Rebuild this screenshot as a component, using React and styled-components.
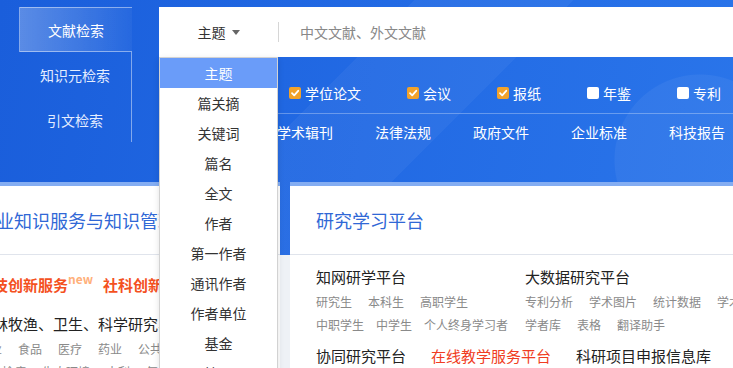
import React from "react";
import styled, { createGlobalStyle, css } from "styled-components";

const GlobalStyle = createGlobalStyle`
  html, body {
    margin: 0;
    padding: 0;
    overflow: hidden;
    background: #eef1f6;
  }
  body {
    font-family: "Noto Sans CJK SC", "Noto Sans", sans-serif;
  }
`;

const Page = styled.div`
  width: 733px;
  height: 368px;
  overflow: hidden;
  background: #eef1f6;
`;

const Hero = styled.div`
  height: 255px;
  padding-top: 7px;
  box-sizing: border-box;
  display: flex;
  background:
    radial-gradient(circle at 700px 160px, rgba(255, 255, 255, 0.05) 0 85px, transparent 86px),
    linear-gradient(135deg, transparent 0 42%, rgba(255, 255, 255, 0.045) 42% 58%, transparent 58%),
    linear-gradient(100deg, #1a5edb 0%, #226ae4 50%, #2a75ea 100%);
`;

const Tabs = styled.div`
  flex: none;
  width: 113px;
  margin-left: 19px;
  display: flex;
  flex-direction: column;
`;

const Tab = styled.div`
  height: 45px;
  box-sizing: border-box;
  display: flex;
  align-items: center;
  justify-content: center;
  font-size: 14px;
  color: #e4edff;
  ${({ $active }) =>
    $active
      ? css`
          color: #fff;
          border: 1px solid rgba(255, 255, 255, 0.45);
          border-right: none;
          background: linear-gradient(90deg, rgba(255, 255, 255, 0.28), rgba(255, 255, 255, 0.04));
        `
      : css`
          border-right: 1px solid rgba(255, 255, 255, 0.45);
        `}
`;

const SearchArea = styled.div`
  flex: none;
  width: 640px;
  margin-left: 27px;
`;

const SearchBar = styled.div`
  position: relative;
  height: 50px;
  background: #fff;
  display: flex;
  align-items: center;
`;

const Select = styled.div`
  flex: none;
  width: 119px;
  display: flex;
  align-items: center;
  justify-content: center;
  gap: 6px;
  font-size: 14px;
  color: #333;
  line-height: 20px;
`;

const Caret = styled.span`
  width: 0;
  height: 0;
  border-left: 4px solid transparent;
  border-right: 4px solid transparent;
  border-top: 5px solid #666;
`;

const Divider = styled.span`
  flex: none;
  width: 1px;
  height: 20px;
  background: #d6d6d6;
`;

const Placeholder = styled.span`
  padding-left: 21px;
  font-size: 14px;
  color: #888;
  line-height: 20px;
`;

const Dropdown = styled.ul`
  position: absolute;
  top: 50px;
  left: 0;
  z-index: 10;
  width: 119px;
  box-sizing: border-box;
  margin: 0;
  padding: 0;
  list-style: none;
  background: #fff;
  border: 1px solid #d2d2d2;
  box-shadow: 0 2px 6px rgba(0, 0, 0, 0.12);
`;

const Option = styled.li`
  height: 30px;
  line-height: 30px;
  text-align: center;
  font-size: 14px;
  color: #333;
  ${({ $active }) =>
    $active &&
    css`
      background: #6a9cf9;
      color: #fff;
    `}
`;

const CheckRow = styled.div`
  display: flex;
  gap: 46px;
  padding: 28px 0 12px 12px;
  border-bottom: 1px solid rgba(255, 255, 255, 0.3);
  white-space: nowrap;
`;

const CheckItem = styled.label`
  display: flex;
  align-items: center;
  gap: 4px;
  font-size: 14px;
  line-height: 16px;
  color: #fff;
`;

const Box = styled.span`
  width: 12px;
  height: 12px;
  border-radius: 2px;
  display: flex;
  background: ${({ $checked }) => ($checked ? "#f2a22a" : "#fff")};
`;

const CatRow = styled.div`
  height: 36px;
  display: flex;
  align-items: center;
  gap: 42px;
  padding-left: 48px;
  font-size: 14px;
  line-height: 16px;
  color: #fff;
  white-space: nowrap;
`;

const Panels = styled.div`
  display: flex;
  gap: 10px;
  margin-top: -73px;
  margin-left: -48px;
`;

const Panel = styled.div`
  flex: none;
  width: ${({ $width }) => $width}px;
  height: 200px;
  background: #fff;
  border-top: 4px solid #84adf2;
`;

const PanelHead = styled.div`
  height: 69px;
  box-sizing: border-box;
  display: flex;
  align-items: center;
  padding-left: 26px;
  border-bottom: 1px solid #e0e4ec;
  font-size: 18px;
  color: #3068d6;
  white-space: nowrap;
  overflow: hidden;
`;

const PanelBody = styled.div`
  padding: ${({ $top }) => $top}px 0 0 26px;
  white-space: nowrap;
`;

const HotRow = styled.div`
  font-size: 15px;
  line-height: 20px;
  font-weight: bold;
  color: #f4511e;
`;

const NewMark = styled.sup`
  font-size: 12px;
  line-height: 12px;
  color: #ffb07a;
  margin-right: 10px;
  vertical-align: 7px;
`;

const TextRow = styled.div`
  margin-top: ${({ $mt }) => $mt || 0}px;
  font-size: 15px;
  line-height: 20px;
  color: #222;
`;

const Tags = styled.div`
  display: flex;
  gap: ${({ $gap }) => $gap || 16}px;
  margin-top: ${({ $mt }) => $mt || 0}px;
  font-size: 12px;
  line-height: 18px;
  color: #8a8a8a;
`;

const Columns = styled.div`
  display: grid;
  grid-template-columns: 209px 209px;
`;

const PlatformRow = styled.div`
  display: flex;
  gap: 25px;
  margin-top: 12px;
  font-size: 15px;
  line-height: 20px;
  color: #222;
`;

const Platform = styled.span`
  color: ${({ $hot }) => ($hot ? "#f03c22" : "#222")};
`;

const checks = [
  ["学术期刊", true],
  ["学位论文", true],
  ["会议", true],
  ["报纸", true],
  ["年鉴", false],
  ["专利", false],
];

const cats = ["图书", "学术辑刊", "法律法规", "政府文件", "企业标准", "科技报告"];

const fields = [
  "主题", "篇关摘", "关键词", "篇名", "全文", "作者", "第一作者",
  "通讯作者", "作者单位", "基金", "摘要", "小标题",
];

function Checkbox({ checked }) {
  return (
    <Box $checked={checked}>
      {checked && (
        <svg width="12" height="12" viewBox="0 0 12 12">
          <path d="M3 6.2 L5.2 8.4 L9.2 3.8" fill="none" stroke="#fff" strokeWidth="1.8" strokeLinecap="round" strokeLinejoin="round" />
        </svg>
      )}
    </Box>
  );
}

export default function App() {
  return (
    <Page>
      <GlobalStyle />
      <Hero>
        <Tabs>
          <Tab $active>文献检索</Tab>
          <Tab>知识元检索</Tab>
          <Tab>引文检索</Tab>
        </Tabs>
        <SearchArea>
          <SearchBar>
            <Select>
              主题 <Caret />
            </Select>
            <Divider />
            <Placeholder>中文文献、外文文献</Placeholder>
            <Dropdown>
              {fields.map((f, i) => (
                <Option key={f} $active={i === 0}>{f}</Option>
              ))}
            </Dropdown>
          </SearchBar>
          <CheckRow>
            {checks.map(([label, on]) => (
              <CheckItem key={label}>
                <Checkbox checked={on} />
                {label}
              </CheckItem>
            ))}
          </CheckRow>
          <CatRow>
            {cats.map((c) => (
              <span key={c}>{c}</span>
            ))}
          </CatRow>
        </SearchArea>
      </Hero>

      <Panels>
        <Panel $width={328}>
          <PanelHead>行业知识服务与知识管理平台</PanelHead>
          <PanelBody $top={18}>
            <HotRow>
              科技创新服务<NewMark>new</NewMark>社科创新服务
            </HotRow>
            <TextRow $mt={19}>农林牧渔、卫生、科学研究、教育</TextRow>
            <Tags $mt={6}>
              <span>农业</span><span>食品</span><span>医疗</span><span>药业</span><span>公共卫生</span>
            </Tags>
            <Tags $mt={5}>
              <span>检验检疫</span><span>生态环境</span><span>水利</span><span>气象</span>
            </Tags>
          </PanelBody>
        </Panel>

        <Panel $width={480}>
          <PanelHead>研究学习平台</PanelHead>
          <PanelBody $top={12}>
            <Columns>
              <div>
                <TextRow>知网研学平台</TextRow>
                <Tags $mt={6}>
                  <span>研究生</span><span>本科生</span><span>高职学生</span>
                </Tags>
                <Tags $mt={5} $gap={12}>
                  <span>中职学生</span><span>中学生</span><span>个人终身学习者</span>
                </Tags>
              </div>
              <div>
                <TextRow>大数据研究平台</TextRow>
                <Tags $mt={6}>
                  <span>专利分析</span><span>学术图片</span><span>统计数据</span><span>学术热点</span>
                </Tags>
                <Tags $mt={5}>
                  <span>学者库</span><span>表格</span><span>翻译助手</span>
                </Tags>
              </div>
            </Columns>
            <PlatformRow>
              <Platform>协同研究平台</Platform>
              <Platform $hot>在线教学服务平台</Platform>
              <Platform>科研项目申报信息库</Platform>
            </PlatformRow>
          </PanelBody>
        </Panel>
      </Panels>
    </Page>
  );
}
